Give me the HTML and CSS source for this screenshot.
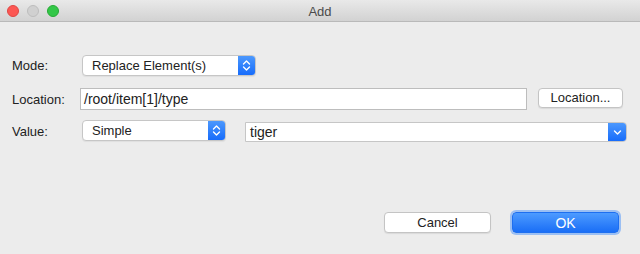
FILE: index.html
```html
<!DOCTYPE html>
<html lang="en">
<head>
    <meta charset="UTF-8">
    <meta name="viewport" content="width=device-width, initial-scale=1.0">
    <title>Add</title>
    <link rel="stylesheet" href="styles.css">
</head>
<body>
    <div class="window">
        <header class="titlebar">
            <div class="lights">
                <span class="light red"></span>
                <span class="light gray"></span>
                <span class="light green"></span>
            </div>
            <div class="title">Add</div>
        </header>
        <div class="dialog">
            <div class="row row-mode">
                <label class="label">Mode:</label>
                <div class="popup popup-mode">
                    <span class="popup-text">Replace Element(s)</span>
                    <span class="popup-arrow">
                        <svg width="9" height="13" viewBox="0 0 9 13"><path d="M1.5 5 L4.5 2 L7.5 5 M1.5 8 L4.5 11 L7.5 8" fill="none" stroke="#fff" stroke-width="1.4" stroke-linecap="round" stroke-linejoin="round"/></svg>
                    </span>
                </div>
            </div>
            <div class="row row-location">
                <label class="label">Location:</label>
                <div class="textfield">/root/item[1]/type</div>
                <button class="btn btn-location">Location...</button>
            </div>
            <div class="row row-value">
                <label class="label">Value:</label>
                <div class="popup popup-value">
                    <span class="popup-text">Simple</span>
                    <span class="popup-arrow">
                        <svg width="9" height="13" viewBox="0 0 9 13"><path d="M1.5 5 L4.5 2 L7.5 5 M1.5 8 L4.5 11 L7.5 8" fill="none" stroke="#fff" stroke-width="1.4" stroke-linecap="round" stroke-linejoin="round"/></svg>
                    </span>
                </div>
                <div class="combo">
                    <span class="combo-text">tiger</span>
                    <span class="combo-arrow">
                        <svg width="9" height="7" viewBox="0 0 9 7"><path d="M1.5 2 L4.5 5 L7.5 2" fill="none" stroke="#fff" stroke-width="1.4" stroke-linecap="round" stroke-linejoin="round"/></svg>
                    </span>
                </div>
            </div>
            <div class="actions">
                <button class="btn btn-cancel">Cancel</button>
                <button class="btn btn-ok">OK</button>
            </div>
        </div>
    </div>
</body>
</html>
```

FILE: styles.css
```css
body {
    margin: 0;
    padding: 0;
    font-family: "Liberation Sans", Arial, sans-serif;
    font-size: 13px;
    color: #222;
    background: #ececec;
}
.window {
    width: 640px;
    height: 254px;
    background: #ececec;
    overflow: hidden;
}
.titlebar {
    position: relative;
    height: 21px;
    border-bottom: 1px solid #b9b9b9;
    background: linear-gradient(#e9e9e9, #d2d2d2);
    display: flex;
    align-items: center;
    justify-content: center;
}
.lights {
    position: absolute;
    left: 7px;
    top: 5px;
    display: flex;
    gap: 8px;
}
.light {
    width: 12px;
    height: 12px;
    border-radius: 50%;
    box-sizing: border-box;
}
.light.red {
    background: #fc5753;
    border: 1px solid #df4744;
}
.light.gray {
    background: #d0d0d0;
    border: 1px solid #bdbdbd;
}
.light.green {
    background: #33c748;
    border: 1px solid #27aa35;
}
.title {
    color: #4b4b4b;
    font-size: 13px;
    padding-top: 1px;
}
.dialog {
    padding: 32px 0 0 12px;
}
.row {
    display: flex;
    align-items: center;
    height: 22px;
}
.row-location {
    margin-top: 12px;
}
.row-value {
    margin-top: 10px;
}
.label {
    width: 68px;
    flex: none;
}
.popup {
    display: flex;
    height: 21px;
    box-sizing: border-box;
    background: #fff;
    border: 1px solid #c6c6c6;
    border-radius: 4px;
    box-shadow: 0 1px 1px rgba(0, 0, 0, 0.06);
    overflow: hidden;
    margin-left: 2px;
}
.popup-mode {
    width: 174px;
}
.popup-value {
    width: 144px;
    margin-top: -1px;
}
.popup-text {
    flex: 1;
    padding-left: 9px;
    line-height: 19px;
}
.popup-arrow {
    width: 17px;
    display: flex;
    align-items: center;
    justify-content: center;
    background: linear-gradient(#4c98fd, #176cfb);
}
.textfield {
    width: 447px;
    height: 22px;
    box-sizing: border-box;
    background: #fff;
    border: 1px solid #bdbdbd;
    padding-left: 3px;
    font-size: 14px;
    line-height: 20px;
}
.btn {
    font-family: inherit;
    font-size: 13px;
    color: #222;
    background: #fff;
    border: 1px solid #c4c4c4;
    border-radius: 4px;
    box-shadow: 0 1px 1px rgba(0, 0, 0, 0.08);
    height: 20px;
    padding: 0;
}
.btn-location {
    width: 85px;
    margin-left: 11px;
    margin-top: -3px;
}
.combo {
    display: flex;
    width: 382px;
    height: 20px;
    box-sizing: border-box;
    margin-left: 19px;
    margin-top: 2px;
    background: #fff;
    border: 1px solid #c6c6c6;
    border-radius: 0 4px 4px 0;
    overflow: hidden;
}
.combo-text {
    flex: 1;
    padding-left: 4px;
    font-size: 14px;
    line-height: 18px;
}
.combo-arrow {
    width: 18px;
    display: flex;
    align-items: center;
    justify-content: center;
    background: linear-gradient(#4c98fd, #176cfb);
}
.actions {
    display: flex;
    justify-content: flex-end;
    gap: 21px;
    margin-top: 70px;
    padding-right: 21px;
}
.btn-cancel {
    width: 107px;
    height: 21px;
}
.btn-ok {
    width: 107px;
    height: 21px;
    color: #fff;
    font-size: 14px;
    border: 1px solid #1e6ff0;
    background: linear-gradient(#4d9bff, #1a6ef6);
    box-shadow: 0 0 0 2px rgba(90, 155, 250, 0.55);
}
```
